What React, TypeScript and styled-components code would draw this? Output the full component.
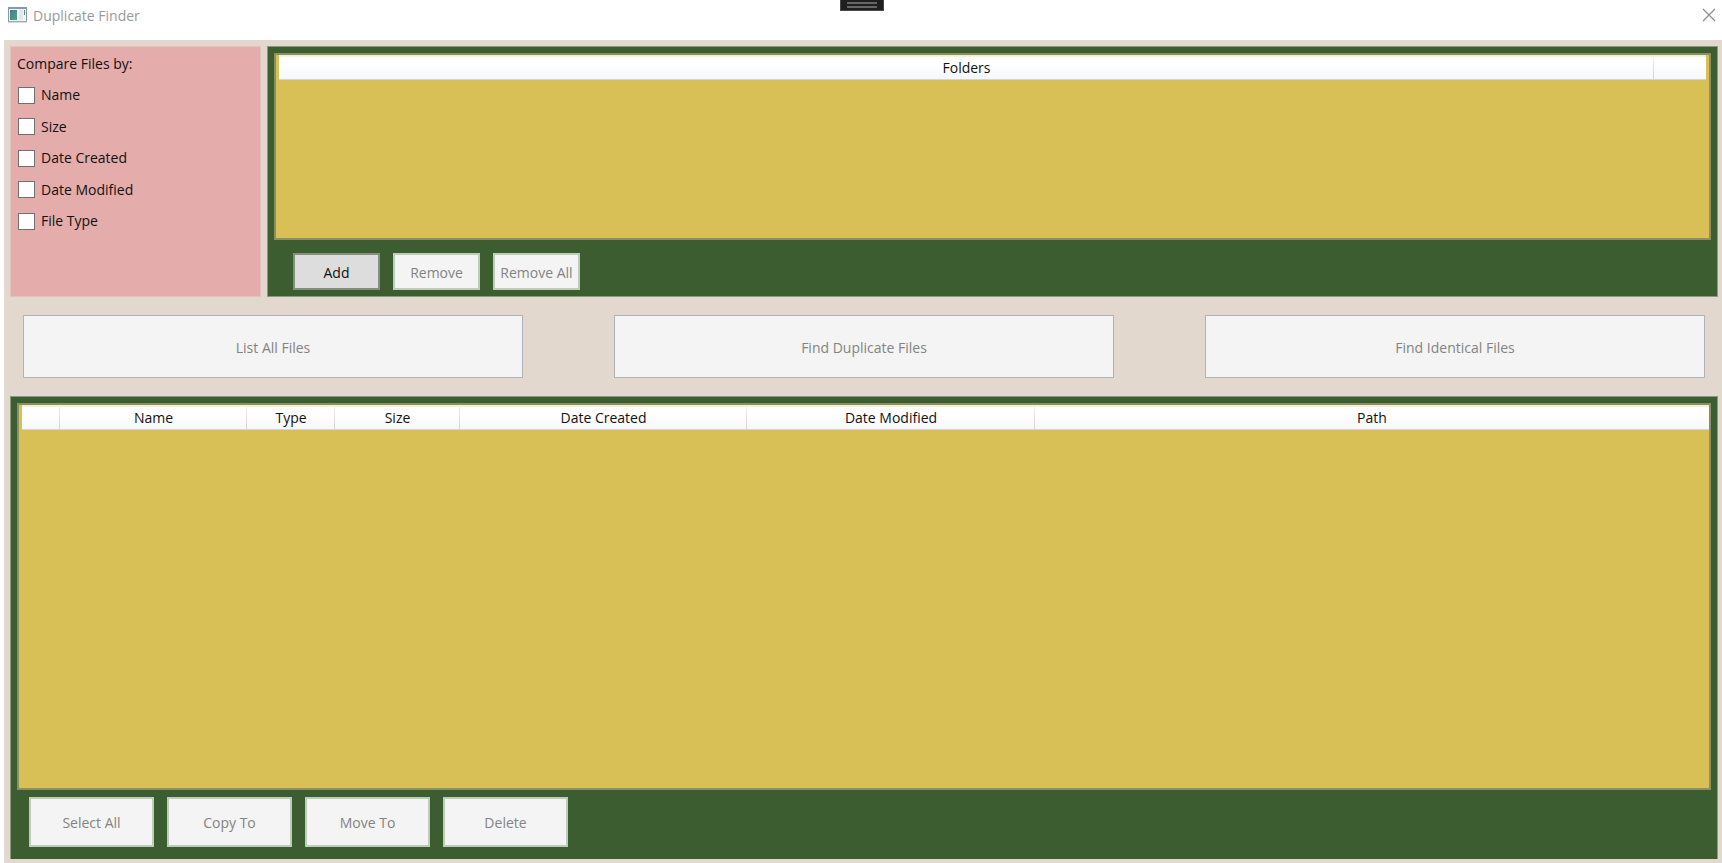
import React from "react";
import styled, { createGlobalStyle } from "styled-components";

const GlobalStyle = createGlobalStyle`
  *, *::before, *::after { box-sizing: border-box; }
  body {
    margin: 0;
    background: #ffffff;
    color: #111111;
    font: 14px/20px "Open Sans", "Noto Sans", sans-serif;
  }
`;

const Window = styled.div`
  display: flex;
  flex-direction: column;
  min-height: 100vh;
`;

const TitleBar = styled.header`
  display: grid;
  grid-template-columns: 1fr auto 1fr;
  height: 40px;
  padding: 0 6px 0 8px;
`;

const Caption = styled.div`
  display: flex;
  align-items: center;
  gap: 6px;
  height: 30px;
`;

const Title = styled.h1`
  margin: 0;
  padding-top: 2px;
  font-size: 14px;
  font-weight: 400;
  color: #999999;
`;

const ToolbarHandle = styled.button`
  display: flex;
  flex-direction: column;
  gap: 2px;
  width: 44px;
  height: 11px;
  padding: 2px 6px;
  border: 1px solid #484848;
  border-top: 0;
  background: #1f1f1f;
`;

const Grip = styled.span`
  height: 2px;
  width: 30px;
  background: #666666;
`;

const CloseButton = styled.button`
  justify-self: end;
  display: flex;
  align-items: center;
  height: 30px;
  padding: 0;
  border: 0;
  background: transparent;
`;

const Content = styled.main`
  flex: 1;
  display: flex;
  flex-direction: column;
  margin-left: 4px;
  padding: 6px 4px 4px 6px;
  background: #e2d8cd;
`;

const TopRow = styled.div`
  display: flex;
  gap: 6px;
`;

const Criteria = styled.fieldset`
  width: 251px;
  height: 251px;
  margin: 0;
  padding: 7px 6px;
  border: 1px solid #e3c2bc;
  background: #e4acab;
`;

const CriteriaTitle = styled.legend`
  float: left;
  width: 100%;
  padding: 0;
`;

const Options = styled.div`
  clear: both;
  display: flex;
  flex-direction: column;
  justify-content: space-between;
  height: 157px;
  padding-top: 11px;
`;

const Option = styled.label`
  display: flex;
  align-items: center;
  gap: 6px;
  padding-left: 1px;
  height: 20px;
`;

const Checkbox = styled.input`
  appearance: none;
  width: 17px;
  height: 17px;
  margin: 0;
  border: 1px solid #707070;
  background: #ffffff;
  &:checked { background: #707070; box-shadow: inset 0 0 0 3px #ffffff; }
`;

const Panel = styled.section<{ $grow?: boolean }>`
  flex: ${(p) => (p.$grow ? 1 : "none")};
  display: flex;
  flex-direction: column;
  min-width: 0;
  padding: 6px;
  border: 1px solid #8a9b7c;
  background: #3c5d30;
`;

const FoldersPanel = styled(Panel)`
  flex: 1;
`;

const FilesPanel = styled(Panel)`
  border-bottom: 0;
`;

const ListBox = styled.div<{ $endGap: number }>`
  flex: 1;
  padding: 0 ${(p) => p.$endGap}px 0 3px;
  border: 2px solid #8c8e66;
  background: #d8c056;
`;

const ListTable = styled.table`
  width: 100%;
  table-layout: fixed;
  border-collapse: separate;
  border-spacing: 0;
`;

const HeaderCell = styled.th`
  height: 25px;
  padding: 2px 0 0;
  border-bottom: 1px solid #d5d5d5;
  background:
    linear-gradient(#f5eecb, #f8f3dc) top / 100% 2px no-repeat,
    linear-gradient(#eeeeee, #d4d4d8) right bottom / 1px 22px no-repeat,
    linear-gradient(#ffffff 40%, #f6f7f9);
  font-weight: 400;
  line-height: 20px;
  text-align: center;
  &:last-child {
    background:
      linear-gradient(#f5eecb, #f8f3dc) top / 100% 2px no-repeat,
      linear-gradient(#ffffff 40%, #f6f7f9);
  }
`;

const Button = styled.button`
  padding: 2px 0 0;
  border: 1px solid #707070;
  background: #dddddd;
  color: #111111;
  font: inherit;
  &:disabled {
    border-color: #adb2b5;
    background: #f4f4f4;
    color: #838383;
  }
`;

const ActionBar = styled.div`
  display: grid;
  grid-template-columns: repeat(3, 1fr);
  gap: 91px;
  padding: 18px 13px;
`;

const ActionButton = styled(Button)`
  height: 63px;
`;

const FolderButtons = styled.div`
  display: flex;
  gap: 13px;
  padding: 13px 19px 0;
`;

const PanelButton = styled(Button)`
  border: 2px solid #83907f;
  &:disabled { border-color: #becdbb; }
`;

const FolderButton = styled(PanelButton)`
  width: 87px;
  height: 37px;
`;

const FileButtons = styled.div`
  display: flex;
  gap: 13px;
  padding: 7px 12px 6px;
`;

const FileButton = styled(PanelButton)`
  width: 125px;
  height: 50px;
`;

type Column = { name: string; width?: number };

const folderColumns: Column[] = [{ name: "Folders" }, { name: "", width: 52 }];

const fileColumns: Column[] = [
  { name: "", width: 38 },
  { name: "Name", width: 187 },
  { name: "Type", width: 88 },
  { name: "Size", width: 125 },
  { name: "Date Created", width: 287 },
  { name: "Date Modified", width: 288 },
  { name: "Path" },
];

const criteria = ["Name", "Size", "Date Created", "Date Modified", "File Type"];

function List({ label, columns, endGap }: { label: string; columns: Column[]; endGap: number }) {
  return (
    <ListBox $endGap={endGap}>
      <ListTable aria-label={label}>
        <colgroup>
          {columns.map((c, i) => (
            <col key={i} width={c.width} />
          ))}
        </colgroup>
        <thead>
          <tr>
            {columns.map((c, i) => (
              <HeaderCell key={i} scope="col">{c.name}</HeaderCell>
            ))}
          </tr>
        </thead>
        <tbody />
      </ListTable>
    </ListBox>
  );
}

function AppIcon() {
  return (
    <svg width="19" height="16" viewBox="0 0 19 16" aria-hidden="true">
      <defs>
        <linearGradient id="pane" x1="0" y1="0" x2="1" y2="1">
          <stop offset="0" stopColor="#3f7f95" />
          <stop offset="1" stopColor="#4fa67c" />
        </linearGradient>
      </defs>
      <rect x="0.5" y="0.5" width="18" height="14" fill="#f2f5f7" stroke="#8d959e" />
      <path d="M0 1h19" stroke="#8b97a5" strokeWidth="2" />
      <path d="M0 15h19" stroke="#b3b8bd" />
      <rect x="2" y="3" width="7" height="10" fill="url(#pane)" />
      <rect x="11" y="3" width="4" height="10" fill="#e1e8ee" />
      <path d="M16.5 3v5" stroke="#4e8f8a" />
    </svg>
  );
}

export default function App() {
  return (
    <>
      <GlobalStyle />
      <Window>
        <TitleBar>
          <Caption>
            <AppIcon />
            <Title>Duplicate Finder</Title>
          </Caption>
          <ToolbarHandle aria-label="Toolbar">
            <Grip />
            <Grip />
          </ToolbarHandle>
          <CloseButton aria-label="Close">
            <svg width="14" height="14" viewBox="0 0 14 14" fill="none" stroke="#8c8c8c" strokeWidth="1.2">
              <path d="M1 1l12 12M13 1L1 13" />
            </svg>
          </CloseButton>
        </TitleBar>
        <Content>
          <TopRow>
            <Criteria>
              <CriteriaTitle>Compare Files by:</CriteriaTitle>
              <Options>
                {criteria.map((name) => (
                  <Option key={name}>
                    <Checkbox type="checkbox" />
                    {name}
                  </Option>
                ))}
              </Options>
            </Criteria>
            <FoldersPanel>
              <List label="Folders" columns={folderColumns} endGap={3} />
              <FolderButtons>
                <FolderButton>Add</FolderButton>
                <FolderButton disabled>Remove</FolderButton>
                <FolderButton disabled>Remove All</FolderButton>
              </FolderButtons>
            </FoldersPanel>
          </TopRow>
          <ActionBar>
            <ActionButton disabled>List All Files</ActionButton>
            <ActionButton disabled>Find Duplicate Files</ActionButton>
            <ActionButton disabled>Find Identical Files</ActionButton>
          </ActionBar>
          <FilesPanel $grow>
            <List label="Files" columns={fileColumns} endGap={0} />
            <FileButtons>
              <FileButton disabled>Select All</FileButton>
              <FileButton disabled>Copy To</FileButton>
              <FileButton disabled>Move To</FileButton>
              <FileButton disabled>Delete</FileButton>
            </FileButtons>
          </FilesPanel>
        </Content>
      </Window>
    </>
  );
}
